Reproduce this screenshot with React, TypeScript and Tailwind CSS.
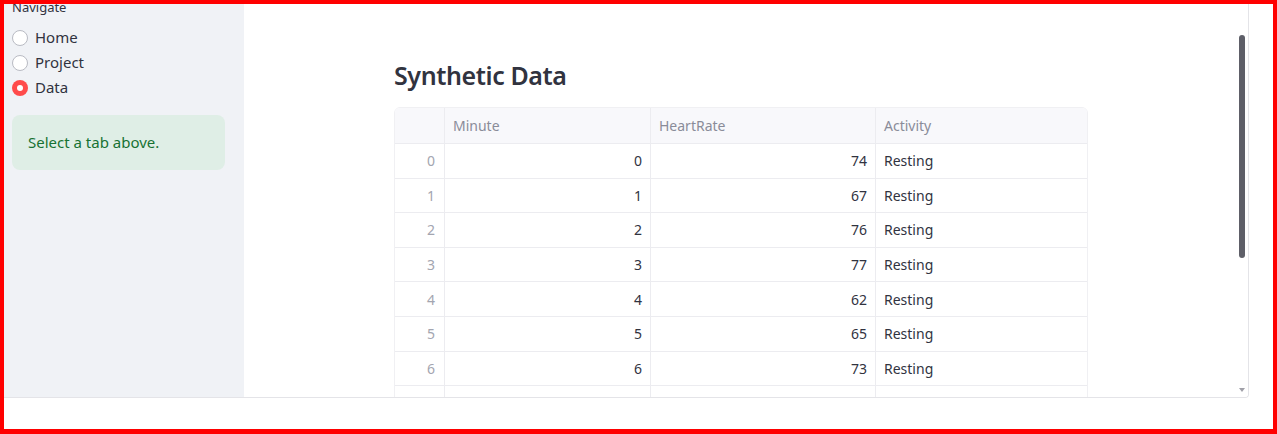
import React from "react";

const rows = [
  [0, 0, 74, "Resting"],
  [1, 1, 67, "Resting"],
  [2, 2, 76, "Resting"],
  [3, 3, 77, "Resting"],
  [4, 4, 62, "Resting"],
  [5, 5, 65, "Resting"],
  [6, 6, 73, "Resting"],
  [7, 7, 70, "Resting"],
];

function Radio({ label, checked }: { label: string; checked?: boolean }) {
  return (
    <div className="flex items-center h-[25px]">
      {checked ? (
        <span className="w-[16px] h-[16px] rounded-full bg-[#ff4b4b] flex items-center justify-center">
          <span className="w-[6px] h-[6px] rounded-full bg-white" />
        </span>
      ) : (
        <span className="w-[16px] h-[16px] rounded-full border border-[#b9bbc3] bg-white" />
      )}
      <span className="ml-[7px] text-[15px] text-[#31333f]">{label}</span>
    </div>
  );
}

export default function App() {
  return (
    <div
      className="w-[1277px] h-[434px] border-[4px] border-b-[5px] border-[#ff0000] bg-white overflow-hidden"
      style={{ fontFamily: "'Noto Sans', sans-serif" }}
    >
      <div className="w-[1245px] h-[394px] flex border-r border-b border-[#e4e4e8] rounded-br-[4px] overflow-hidden">
        {/* Sidebar */}
        <div className="w-[240px] shrink-0 bg-[#f0f2f6] pl-[8px] pr-[19px]">
          <div className="text-[13px] text-[#31333f] leading-[16px] mt-[-5px]">Navigate</div>
          <div className="mt-[10px] flex flex-col">
            <Radio label="Home" />
            <Radio label="Project" />
            <Radio label="Data" checked />
          </div>
          <div className="mt-[15px] h-[55px] rounded-[8px] bg-[#dfeee6] flex items-center pl-[16px] text-[15px] text-[#177233]">
            Select a tab above.
          </div>
        </div>
        {/* Main */}
        <div className="relative flex-1 bg-white overflow-hidden">
          <div className="pl-[150px] pt-[51px]">
            <h2 className="text-[25px] font-semibold text-[#31333f] leading-[40px] tracking-[-0.4px]">
              Synthetic Data
            </h2>
            <div className="mt-[12px] w-[694px] border border-[#f0f0f3] rounded-[6px] overflow-hidden text-[14px]">
              <div className="flex h-[36px] bg-[#f8f8fb] text-[#8a8c99] border-b border-[#ececf0]">
                <div className="w-[50px] border-r border-[#ececf0]" />
                <div className="w-[206px] border-r border-[#ececf0] flex items-center pl-[8px]">Minute</div>
                <div className="w-[225px] border-r border-[#ececf0] flex items-center pl-[8px]">HeartRate</div>
                <div className="w-[210px] flex items-center pl-[8px]">Activity</div>
              </div>
              {rows.map((r) => (
                <div key={r[0]} className="flex h-[34.6px] border-b border-[#ececf0] text-[#31333f]">
                  <div className="w-[50px] border-r border-[#ececf0] flex items-center justify-end pr-[9px] text-[#a3a5b0]">
                    {r[0]}
                  </div>
                  <div className="w-[206px] border-r border-[#ececf0] flex items-center justify-end pr-[8px]">{r[1]}</div>
                  <div className="w-[225px] border-r border-[#ececf0] flex items-center justify-end pr-[8px]">{r[2]}</div>
                  <div className="w-[210px] flex items-center pl-[8px]">{r[3]}</div>
                </div>
              ))}
            </div>
          </div>
          {/* scrollbar overlay */}
          <div className="absolute right-[3px] top-[31px] w-[6px] h-[223px] rounded-full bg-[#5e5f68]" />
          <div className="absolute right-[3px] bottom-[5px] w-0 h-0 border-l-[3px] border-r-[3px] border-t-[4px] border-l-transparent border-r-transparent border-t-[#a0a0a8]" />
        </div>
      </div>
    </div>
  );
}
